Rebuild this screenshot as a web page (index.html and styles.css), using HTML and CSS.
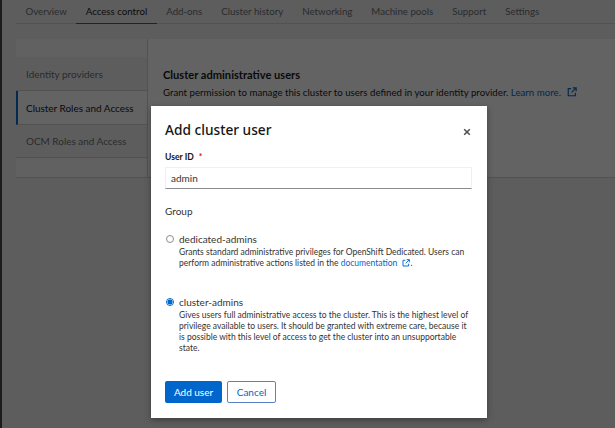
FILE: index.html
```html
<!DOCTYPE html>
<html lang="en">
<head>
<meta charset="utf-8">
<title>Add cluster user</title>
<link rel="stylesheet" href="styles.css">
</head>
<body>
<div class="page">
  <nav class="tabs">
    <a class="tab">Overview</a>
    <a class="tab tab-active">Access control</a>
    <a class="tab">Add-ons</a>
    <a class="tab">Cluster history</a>
    <a class="tab">Networking</a>
    <a class="tab">Machine pools</a>
    <a class="tab">Support</a>
    <a class="tab">Settings</a>
  </nav>
  <div class="content">
    <aside class="side">
      <div class="side-cap"></div>
      <a class="side-item">Identity providers</a>
      <a class="side-item side-active">Cluster Roles and Access</a>
      <a class="side-item side-last">OCM Roles and Access</a>
      <div class="side-cap side-cap-end"></div>
    </aside>
    <main class="panel">
      <h2 class="panel-title">Cluster administrative users</h2>
      <p class="panel-text">Grant permission to manage this cluster to users defined in your identity provider. <a class="link">Learn more. <svg class="ext ext-lg" viewBox="0 0 12 12"><path d="M5 2H1.5v8.5H10V7M7 1h4v4M11 1 5.5 6.5"/></svg></a></p>
    </main>
  </div>
</div>
<div class="backdrop"></div>
<section class="modal">
  <header class="modal-head">
    <h1 class="modal-title">Add cluster user</h1>
    <svg class="close" viewBox="0 0 10 10"><path d="M1.5 1.5l7 7M8.5 1.5l-7 7"/></svg>
  </header>
  <label class="field-label">User ID <span class="req">*</span></label>
  <div class="input">admin</div>
  <div class="group-label">Group</div>
  <div class="radio radio-first">
    <span class="dot"></span>
    <div>
      <div class="radio-name">dedicated-admins</div>
      <p class="radio-desc">Grants standard administrative privileges for OpenShift Dedicated. Users can<br>perform administrative actions listed in the <a class="link">documentation <svg class="ext" viewBox="0 0 12 12"><path d="M5 2H1.5v8.5H10V7M7 1h4v4M11 1 5.5 6.5"/></svg></a>.</p>
    </div>
  </div>
  <div class="radio radio-second">
    <span class="dot dot-on"></span>
    <div>
      <div class="radio-name">cluster-admins</div>
      <p class="radio-desc">Gives users full administrative access to the cluster. This is the highest level of<br>privilege available to users. It should be granted with extreme care, because it<br>is possible with this level of access to get the cluster into an unsupportable<br>state.</p>
    </div>
  </div>
  <footer class="actions">
    <button class="btn btn-primary">Add user</button>
    <button class="btn btn-secondary">Cancel</button>
  </footer>
</section>
</body>
</html>
```
FILE: styles.css
```css
* { box-sizing: border-box; }
html, body { margin: 0; height: 100%; }
body {
  width: 615px;
  height: 428px;
  overflow: hidden;
  position: relative;
  font-family: Lato, "Open Sans", sans-serif;
  background: #f0f0f0;
  color: #151515;
}
.page { height: 428px; border-left: 2px solid #444; }
.tabs {
  display: flex;
  margin-left: 14px;
  height: 24px;
  border-bottom: 1px solid #d2d2d2;
  font-size: 9.7px;
}
.tab { padding: 5px 9.5px 0; color: #6a6e73; white-space: nowrap; height: 24px; }
.tab-active { color: #151515; border-bottom: 1px solid #06c; }
.content { display: flex; margin: 15px 0 0 14px; background: #fff; border-bottom: 1px solid #d2d2d2; }
.side {
  width: 132px;
  flex: none;
  font-size: 9.95px;
  border-right: 1px solid #d2d2d2;
}
.side-cap { height: 18px; background: #fafafa; }
.side-cap-end { height: 19px; }
.side-item {
  display: flex;
  align-items: center;
  height: 34px;
  padding-left: 10px;
  color: #6a6e73;
  background: #f0f0f0;
  border-bottom: 1px solid #d2d2d2;
}
.side-active { background: #fff; color: #151515; border-left: 2px solid #06c; padding-left: 8px; }
.side-last { height: 33px; }
.panel { padding: 29px 0 0 15px; flex: 1; }
.panel-title { margin: 0; font-size: 11.1px; font-weight: 700; line-height: 14px; }
.panel-text { margin: 3px 0 0; font-size: 9.7px; line-height: 14px; white-space: nowrap; color: #151515; }
.link { color: #06c; }
.ext { width: 8px; height: 8px; margin-left: 3px; vertical-align: -1px; fill: none; stroke: #06c; stroke-width: 1.4; }
.ext-lg { width: 10px; height: 10px; margin-left: 4px; }
.backdrop { position: absolute; inset: 0; background: rgba(3, 3, 3, .62); }
.modal {
  position: absolute;
  left: 151px;
  top: 106px;
  width: 336px;
  height: 312px;
  padding: 14px 15px 0 14px;
  background: #fff;
  box-shadow: 0 2px 6px rgba(0, 0, 0, .35);
  display: flex;
  flex-direction: column;
}
.modal-head { display: flex; justify-content: space-between; align-items: center; height: 20px; padding-right: 1px; }
.modal-title { margin: 0; font-size: 13.7px; font-weight: 500; line-height: 20px; font-family: "Noto Sans", sans-serif; }
.close { width: 8px; height: 8px; margin-top: 3px; fill: none; stroke: #4f5255; stroke-width: 2; }
.field-label { margin-top: 11px; font-size: 8.6px; font-weight: 700; line-height: 12px; }
.req { color: #c9190b; margin-left: 3px; }
.input {
  margin-top: 4px;
  height: 22px;
  padding-left: 5px;
  font-size: 10px;
  line-height: 21px;
  color: #333;
  border: 1px solid #f0f0f0;
  border-bottom-color: #8a8d90;
}
.group-label { margin-top: 15px; font-size: 10px; line-height: 14px; color: #333; }
.radio { display: flex; gap: 5px; }
.radio-first { margin-top: 14px; }
.radio-second { margin-top: 26px; }
.dot { flex: none; width: 8px; height: 8px; margin: 3px 0 0 1px; border: 1px solid #8a8d90; border-radius: 50%; background: #fff; }
.dot-on { border-color: #06c; background: radial-gradient(circle, #06c 0 2.2px, #fff 2.8px); }
.radio-name { font-size: 10px; line-height: 14px; color: #333; }
.radio-desc { margin: 1px 0 0; font-size: 8.5px; line-height: 11px; color: #333; white-space: nowrap; }
.actions { margin-top: auto; margin-bottom: 15px; display: flex; gap: 5px; }
.btn { height: 22px; border-radius: 2px; font: inherit; font-size: 10px; padding: 0; }
.btn-primary { width: 57px; background: #06c; color: #fff; border: 0; }
.btn-secondary { width: 49px; background: #fff; color: #06c; border: 1px solid #5b82c9; }
```
